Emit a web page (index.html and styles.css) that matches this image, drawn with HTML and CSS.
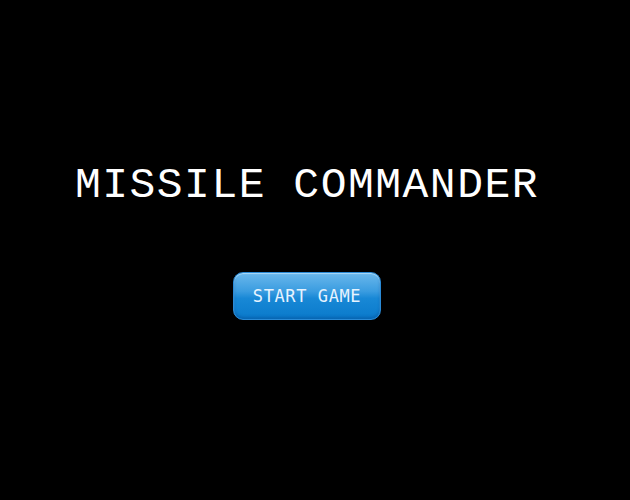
FILE: index.html
```html
<!DOCTYPE html>
<html>
<head>
<meta charset="utf-8">
<link rel="stylesheet" href="styles.css">
</head>
<body>
<div class="screen">
  <h1 class="title">MISSILE COMMANDER</h1>
  <button class="start">START GAME</button>
</div>
</body>
</html>
```
FILE: styles.css
```css
html, body {
  margin: 0;
  padding: 0;
  background: #000;
  width: 630px;
  height: 500px;
  overflow: hidden;
}
.screen {
  display: flex;
  flex-direction: column;
  align-items: center;
  padding-right: 16px;
  padding-top: 160px;
}
.title {
  margin: 0;
  font-family: "Liberation Mono", monospace;
  font-weight: normal;
  font-size: 43px;
  line-height: 52px;
  color: #fff;
  letter-spacing: 1.5px;
}
.start {
  margin-top: 60px;
  width: 148px;
  height: 48px;
  border-radius: 10px;
  border: 1px solid #2a8ad6;
  background: linear-gradient(to bottom, #6ab8ec 0%, #3a9ce0 40%, #1888d6 55%, #0a7acb 100%);
  box-shadow: inset 0 1px 1px rgba(200,235,255,0.7), inset 0 -2px 3px rgba(0,60,130,0.35);
  color: #e6f3ff;
  font-family: "DejaVu Sans Mono", monospace;
  font-size: 17px;
  padding: 0;
  letter-spacing: 0.6px;
}
```
